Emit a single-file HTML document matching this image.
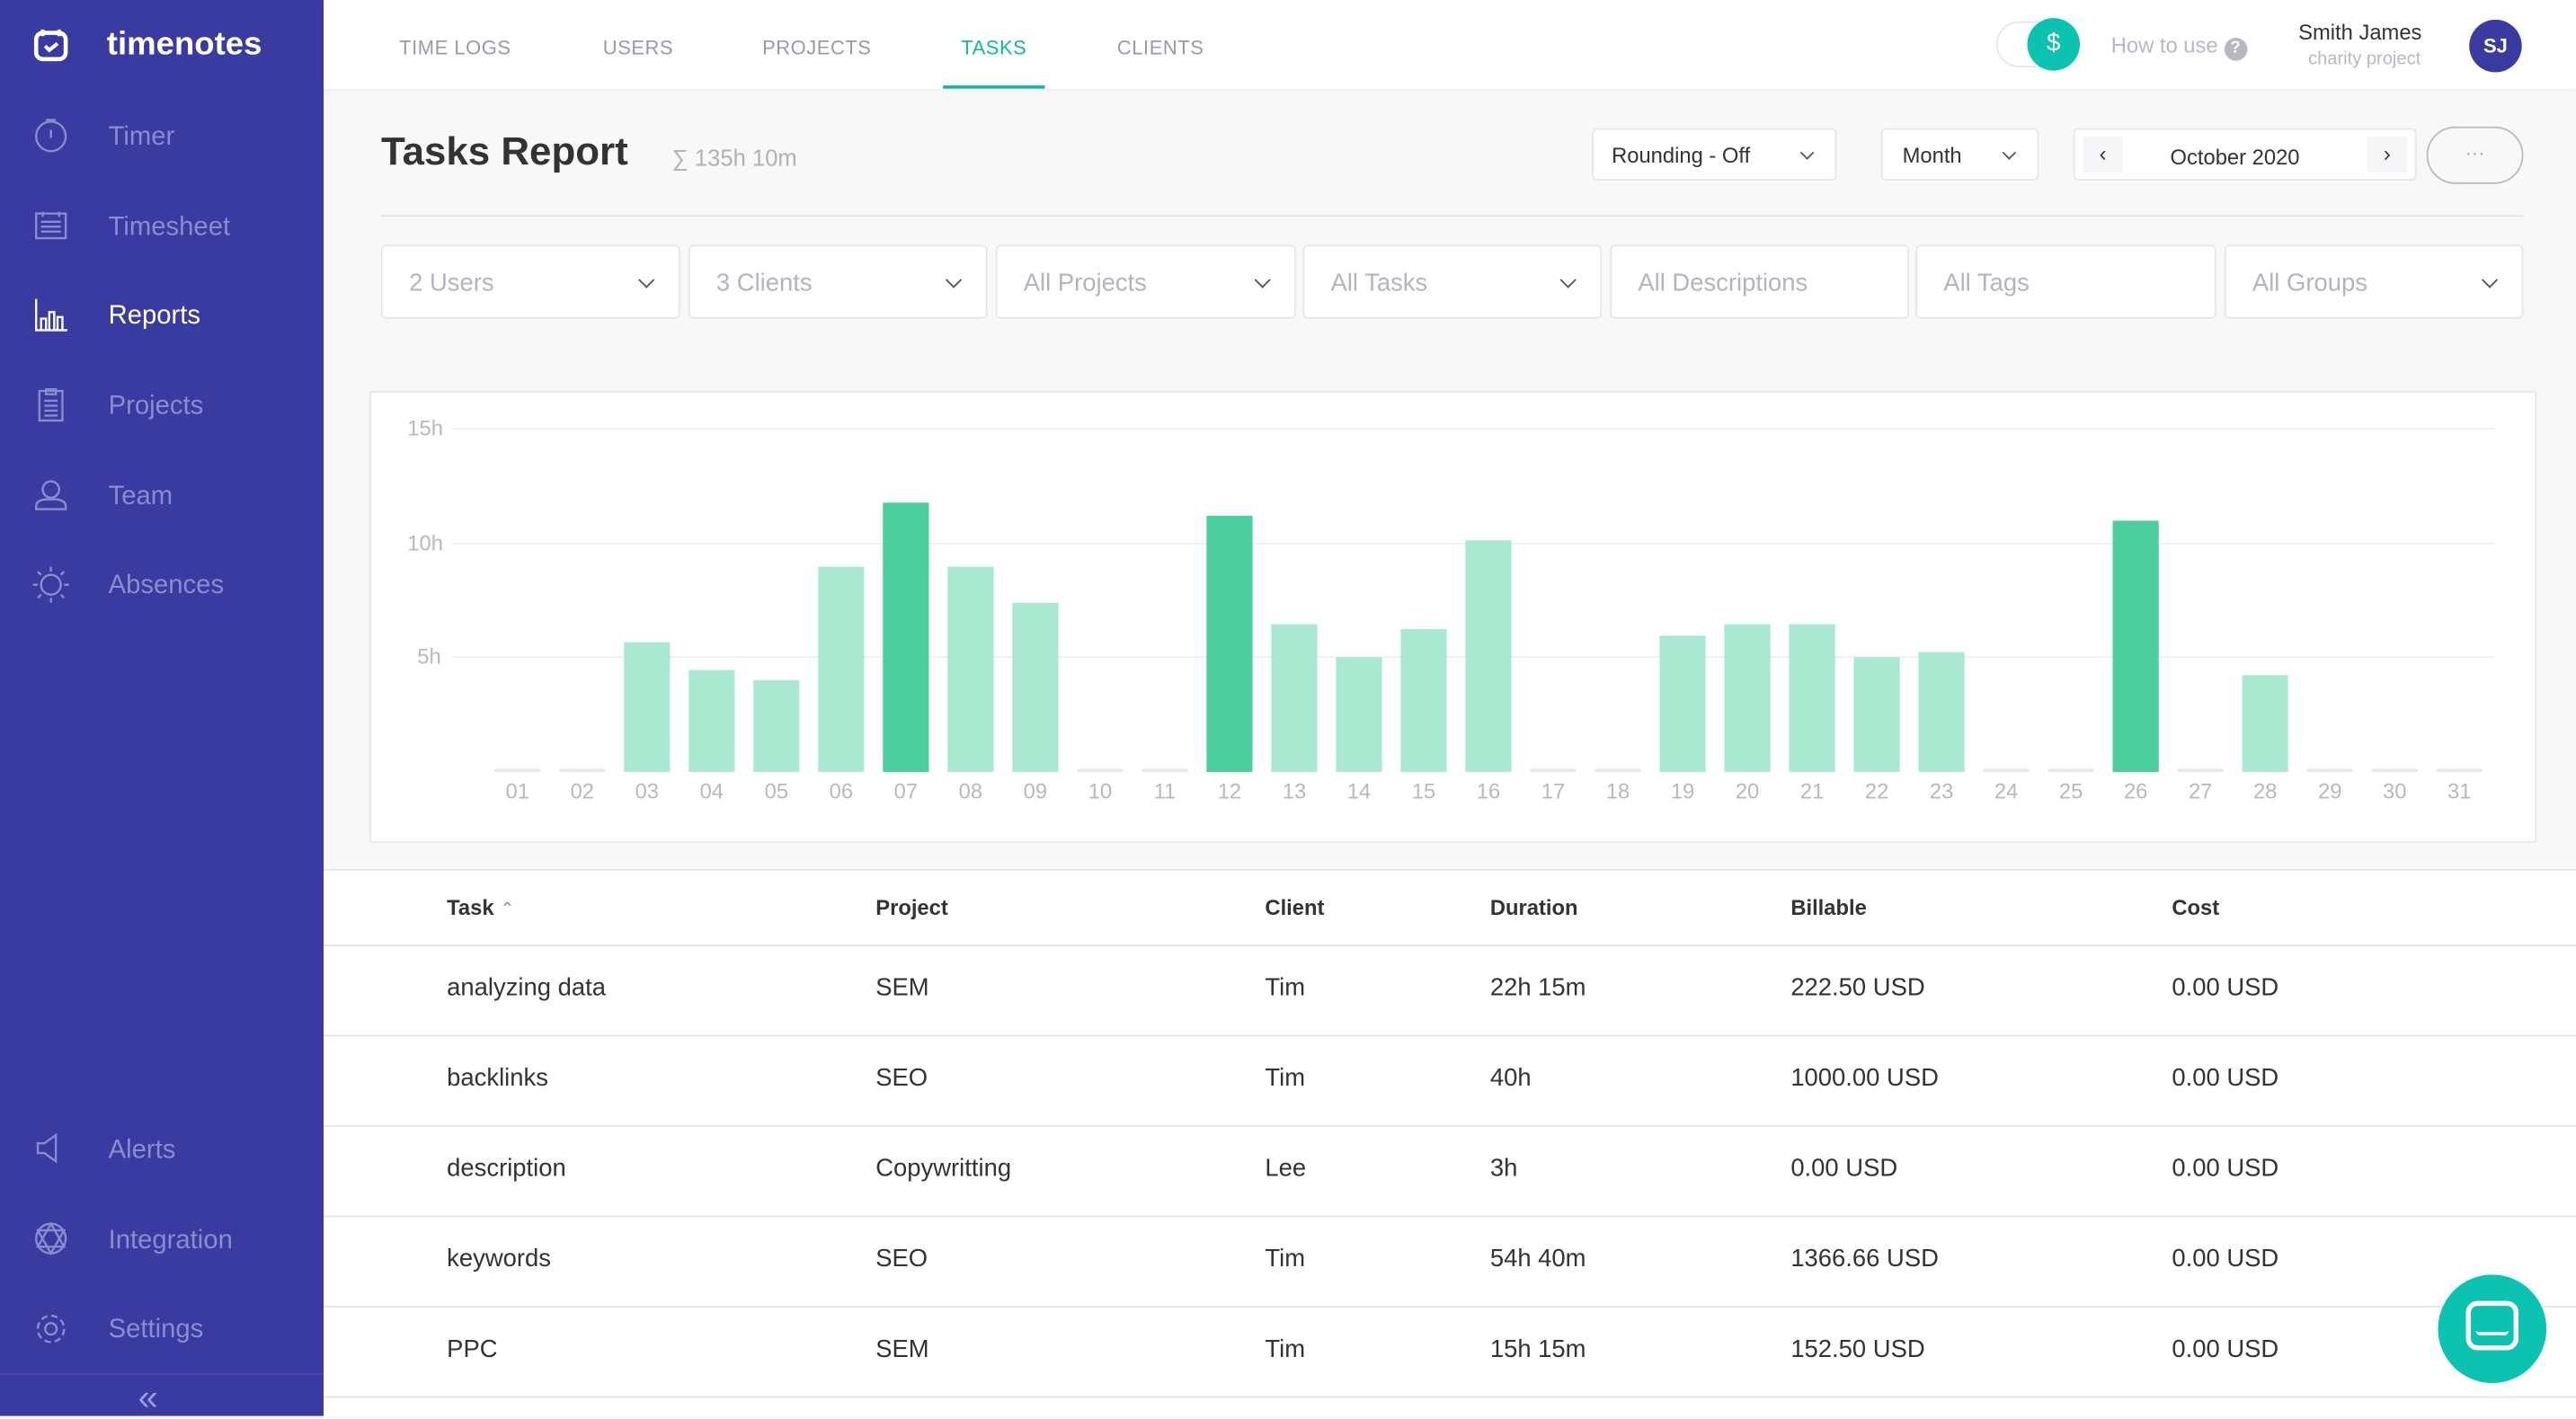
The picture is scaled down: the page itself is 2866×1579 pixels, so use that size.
<!DOCTYPE html>
<html><head><meta charset="utf-8"><style>
*{box-sizing:border-box;margin:0;padding:0}
html,body{width:2866px;height:1576px;overflow:hidden;background:#f8f8f8;font-family:"Liberation Sans",sans-serif}
#w{position:absolute;left:0;top:0;width:1568px;height:862px;transform:scale(1.82781);transform-origin:0 0;background:#f8f8f8}
.abs{position:absolute}
#sb{left:0;top:0;width:197px;height:862px;background:#3a3ba0}
.nav{position:absolute;left:66px;font-size:16px;color:#8b8cd0;margin-top:2px}
.ic{position:absolute;left:19px;width:24px;height:24px}
#top{left:197px;top:0;width:1371px;height:54px;background:#fff;box-shadow:0 1px 3px rgba(0,0,0,.06)}
.tab{position:absolute;top:22px;font-size:12px;color:#9a9aa6;letter-spacing:.3px}
.sel{position:absolute;top:149px;height:45px;background:#fff;border:1px solid #e6e6ec;border-radius:3px;font-size:15px;color:#b4b4bd;padding:14px 16px 12px}
.chev{position:absolute;right:16px;top:17px;width:7px;height:7px;border-right:1.5px solid #555;border-bottom:1.5px solid #555;transform:rotate(45deg)}
.th{position:absolute;top:545px;font-size:13px;font-weight:bold;color:#333}
.row{position:absolute;left:197px;width:1371px;height:55px;border-bottom:1px solid #e4e4e8;background:#fff}
.row span{position:absolute;top:17px;font-size:15px;color:#333}
</style></head><body><div id="w">
<div id="sb" class="abs">
 <svg class="ic" style="top:15px" viewBox="0 0 24 24"><rect x="3" y="5" width="18" height="16" rx="4" fill="none" stroke="#fff" stroke-width="2.5"/><path d="M7 3v4M17 3v4M8.5 13l2.5 2.5 5-4" fill="none" stroke="#fff" stroke-width="2.2"/></svg>
 <div class="abs" style="left:65px;top:16px;font-size:20px;font-weight:bold;color:#fff">timenotes</div>
 <svg class="ic" style="top:70px" viewBox="0 0 24 24" fill="none" stroke="#8b8cd0" stroke-width="1.3"><circle cx="12" cy="13" r="9"/><path d="M9 3h6M12 3v1M12 9v5"/></svg>
 <div class="nav" style="top:73px">Timer</div>
 <svg class="ic" style="top:125px" viewBox="0 0 24 24" fill="none" stroke="#8b8cd0" stroke-width="1.3"><rect x="3" y="5" width="18" height="15"/><path d="M7 7v-3M17 7v-3M6 10h12M6 13h12M6 16h12"/></svg>
 <div class="nav" style="top:128px">Timesheet</div>
 <svg class="ic" style="top:180px" viewBox="0 0 24 24" fill="none" stroke="#fff" stroke-width="1.3"><path d="M3 2v19h19M6 21v-7h3v7M11 21v-11h3v11M16 21v-8h3v8"/></svg>
 <div class="nav" style="top:182px;color:#fff">Reports</div>
 <svg class="ic" style="top:234px" viewBox="0 0 24 24" fill="none" stroke="#8b8cd0" stroke-width="1.3"><rect x="5" y="4" width="14" height="18"/><path d="M9 3h6v3H9zM8 10h8M8 13h8M8 16h8M8 19h8"/></svg>
 <div class="nav" style="top:237px">Projects</div>
 <svg class="ic" style="top:289px" viewBox="0 0 24 24" fill="none" stroke="#8b8cd0" stroke-width="1.3"><circle cx="12" cy="9" r="5"/><path d="M3 21v-2q0-3 5-4h8q5 1 5 4v2z"/></svg>
 <div class="nav" style="top:292px">Team</div>
 <svg class="ic" style="top:344px" viewBox="0 0 24 24" fill="none" stroke="#8b8cd0" stroke-width="1.3"><circle cx="12" cy="12" r="6"/><path d="M12 1v3M12 20v3M1 12h3M20 12h3M4 4l2 2M18 18l2 2M4 20l2-2M18 6l2-2"/></svg>
 <div class="nav" style="top:346px">Absences</div>
 <svg class="ic" style="top:687px" viewBox="0 0 24 24" fill="none" stroke="#8b8cd0" stroke-width="1.3"><path d="M4 9h4l7-5v16l-7-5H4z"/></svg>
 <div class="nav" style="top:690px">Alerts</div>
 <svg class="ic" style="top:742px" viewBox="0 0 24 24" fill="none" stroke="#8b8cd0" stroke-width="1.3"><circle cx="12" cy="12" r="9"/><path d="M12 3l8 14H4zM4 7h16L12 21z"/></svg>
 <div class="nav" style="top:745px">Integration</div>
 <svg class="ic" style="top:797px" viewBox="0 0 24 24" fill="none" stroke="#8b8cd0" stroke-width="1.3"><circle cx="12" cy="12" r="3.5"/><circle cx="12" cy="12" r="8" stroke-dasharray="4 2.3"/></svg>
 <div class="nav" style="top:799px">Settings</div>
 <div class="abs" style="left:0;top:836px;width:197px;height:1px;background:#4a4bb0"></div>
 <div class="abs" style="left:84px;top:838px;font-size:22px;color:#9a9be0">«</div>
</div>
<div id="top" class="abs">
 <div class="tab" style="left:46px">TIME LOGS</div>
 <div class="tab" style="left:170px">USERS</div>
 <div class="tab" style="left:267px">PROJECTS</div>
 <div class="tab" style="left:388px;color:#14b89c">TASKS</div>
 <div class="abs" style="left:377px;top:52px;width:62px;height:2px;background:#14b89c"></div>
 <div class="tab" style="left:483px">CLIENTS</div>
 <div class="abs" style="left:1018px;top:13px;width:48px;height:28px;border:1px solid #e6e6ec;border-radius:14px"></div>
 <div class="abs" style="left:1037px;top:11px;width:32px;height:32px;border-radius:50%;background:#0cc3b2;color:#fff;font-size:15px;text-align:center;line-height:32px">$</div>
 <div class="abs" style="left:1088px;top:20px;font-size:13px;color:#b8b8c2">How to use <span style="display:inline-block;width:14px;height:14px;border-radius:50%;background:#b8b8c2;color:#fff;font-size:10px;text-align:center;line-height:14px;font-weight:bold">?</span></div>
 <div class="abs" style="left:1202px;top:12px;font-size:13px;color:#333">Smith James</div>
 <div class="abs" style="left:1208px;top:30px;font-size:11px;color:#b8b8c2">charity project</div>
 <div class="abs" style="left:1306px;top:12px;width:32px;height:32px;border-radius:50%;background:#3a3ba0;color:#fff;font-size:12px;font-weight:bold;text-align:center;line-height:32px">SJ</div>
</div>
<div class="abs" style="left:232px;top:79px;font-size:24px;font-weight:bold;color:#333">Tasks Report</div>
<div class="abs" style="left:409px;top:88px;font-size:14px;color:#b0b0b8">∑ 135h 10m</div>
<div class="abs" style="left:969px;top:78px;width:149px;height:32px;background:#fff;border:1px solid #e6e6ec;border-radius:3px;font-size:13px;color:#333;padding:8px 11px">Rounding - Off<div class="chev" style="top:11px;right:14px;width:6px;height:6px"></div></div>
<div class="abs" style="left:1145px;top:78px;width:96px;height:32px;background:#fff;border:1px solid #e6e6ec;border-radius:3px;font-size:13px;color:#333;padding:8px 12px">Month<div class="chev" style="top:11px;right:14px;width:6px;height:6px"></div></div>
<div class="abs" style="left:1262px;top:78px;width:209px;height:32px;background:#fff;border:1px solid #e6e6ec;border-radius:3px;font-size:13px;color:#333"><div class="abs" style="left:5px;top:4px;width:24px;height:22px;background:#f6f6f8;text-align:center;line-height:22px">‹</div><div class="abs" style="left:58px;top:9px">October 2020</div><div class="abs" style="right:5px;top:4px;width:24px;height:22px;background:#f6f6f8;text-align:center;line-height:22px">›</div></div>
<div class="abs" style="left:1477px;top:77px;width:59px;height:35px;border:1px solid #bbbbc4;border-radius:18px;text-align:center;line-height:30px;color:#aaa;font-size:12px">···</div>
<div class="abs" style="left:232px;top:131px;width:1304px;height:1px;background:#e4e4e8"></div>
<div class="sel" style="left:232px;width:182px">2 Users<div class="chev"></div></div>
<div class="sel" style="left:419px;width:182px">3 Clients<div class="chev"></div></div>
<div class="sel" style="left:606px;width:183px">All Projects<div class="chev"></div></div>
<div class="sel" style="left:793px;width:182px">All Tasks<div class="chev"></div></div>
<div class="sel" style="left:980px;width:182px">All Descriptions</div>
<div class="sel" style="left:1166px;width:183px">All Tags</div>
<div class="sel" style="left:1354px;width:182px">All Groups<div class="chev"></div></div>
<div class="abs" style="left:225px;top:238px;width:1319px;height:275px;background:#fff;border:1px solid #e6e6ec"></div>
<svg class="abs" style="left:0;top:0" width="1568" height="862" font-family="Liberation Sans" font-size="13" fill="#b8b8c0">
<g stroke="#f0f0f2"><line x1="275" x2="1518" y1="261" y2="261"/><line x1="275" x2="1518" y1="331" y2="331"/><line x1="275" x2="1518" y1="400" y2="400"/></g>
<text x="248" y="265">15h</text><text x="248" y="335">10h</text><text x="254" y="404">5h</text>
<g id="bars"></g>
</svg>
<div class="abs" style="left:197px;top:529px;width:1371px;height:333px;background:#fff;border-top:1px solid #e4e4e8"></div>
<div class="abs" style="left:197px;top:575px;width:1371px;height:1px;background:#e4e4e8"></div>
<div class="th" style="left:272px">Task <span style="color:#999;font-weight:normal;font-size:11px">⌃</span></div>
<div class="th" style="left:533px">Project</div><div class="th" style="left:770px">Client</div><div class="th" style="left:907px">Duration</div><div class="th" style="left:1090px">Billable</div><div class="th" style="left:1322px">Cost</div>
<div class="row" style="top:576px"><span style="left:75px">analyzing data</span><span style="left:336px">SEM</span><span style="left:573px">Tim</span><span style="left:710px">22h 15m</span><span style="left:893px">222.50 USD</span><span style="left:1125px">0.00 USD</span></div>
<div class="row" style="top:631px"><span style="left:75px">backlinks</span><span style="left:336px">SEO</span><span style="left:573px">Tim</span><span style="left:710px">40h</span><span style="left:893px">1000.00 USD</span><span style="left:1125px">0.00 USD</span></div>
<div class="row" style="top:686px"><span style="left:75px">description</span><span style="left:336px">Copywritting</span><span style="left:573px">Lee</span><span style="left:710px">3h</span><span style="left:893px">0.00 USD</span><span style="left:1125px">0.00 USD</span></div>
<div class="row" style="top:741px"><span style="left:75px">keywords</span><span style="left:336px">SEO</span><span style="left:573px">Tim</span><span style="left:710px">54h 40m</span><span style="left:893px">1366.66 USD</span><span style="left:1125px">0.00 USD</span></div>
<div class="row" style="top:796px"><span style="left:75px">PPC</span><span style="left:336px">SEM</span><span style="left:573px">Tim</span><span style="left:710px">15h 15m</span><span style="left:893px">152.50 USD</span><span style="left:1125px">0.00 USD</span></div>
<div class="abs" style="left:1484px;top:776px;width:66px;height:66px;border-radius:50%;background:#0cc3b2"></div>
<div class="abs" style="left:1501px;top:792px;width:32px;height:30px;border:3px solid #fff;border-radius:7px"></div>
<div class="abs" style="left:1507px;top:810px;width:20px;height:3px;border-bottom:2.5px solid #fff;border-radius:0 0 8px 8px"></div>
<script>
var tops={3:391,4:408,5:414,6:345,7:306,8:345,9:367,12:314,13:380,14:400,15:383,16:329,19:387,20:380,21:380,22:400,23:397,26:317,28:411};
var dark={7:1,12:1,26:1};var s='';
for(var i=1;i<=31;i++){var cx=315+(i-1)*39.4;var t=tops[i];
if(t){s+='<rect x="'+(cx-14)+'" y="'+t+'" width="28" height="'+(470-t)+'" fill="'+(dark[i]?'#4ccf9e':'#abe8d1')+'"/>';}
else s+='<rect x="'+(cx-14)+'" y="468" width="28" height="2" fill="#e8e8ec"/>';
s+='<text x="'+cx+'" y="486" text-anchor="middle">'+(i<10?'0'+i:i)+'</text>';}
document.getElementById('bars').innerHTML=s;
</script>
</div></body></html>
